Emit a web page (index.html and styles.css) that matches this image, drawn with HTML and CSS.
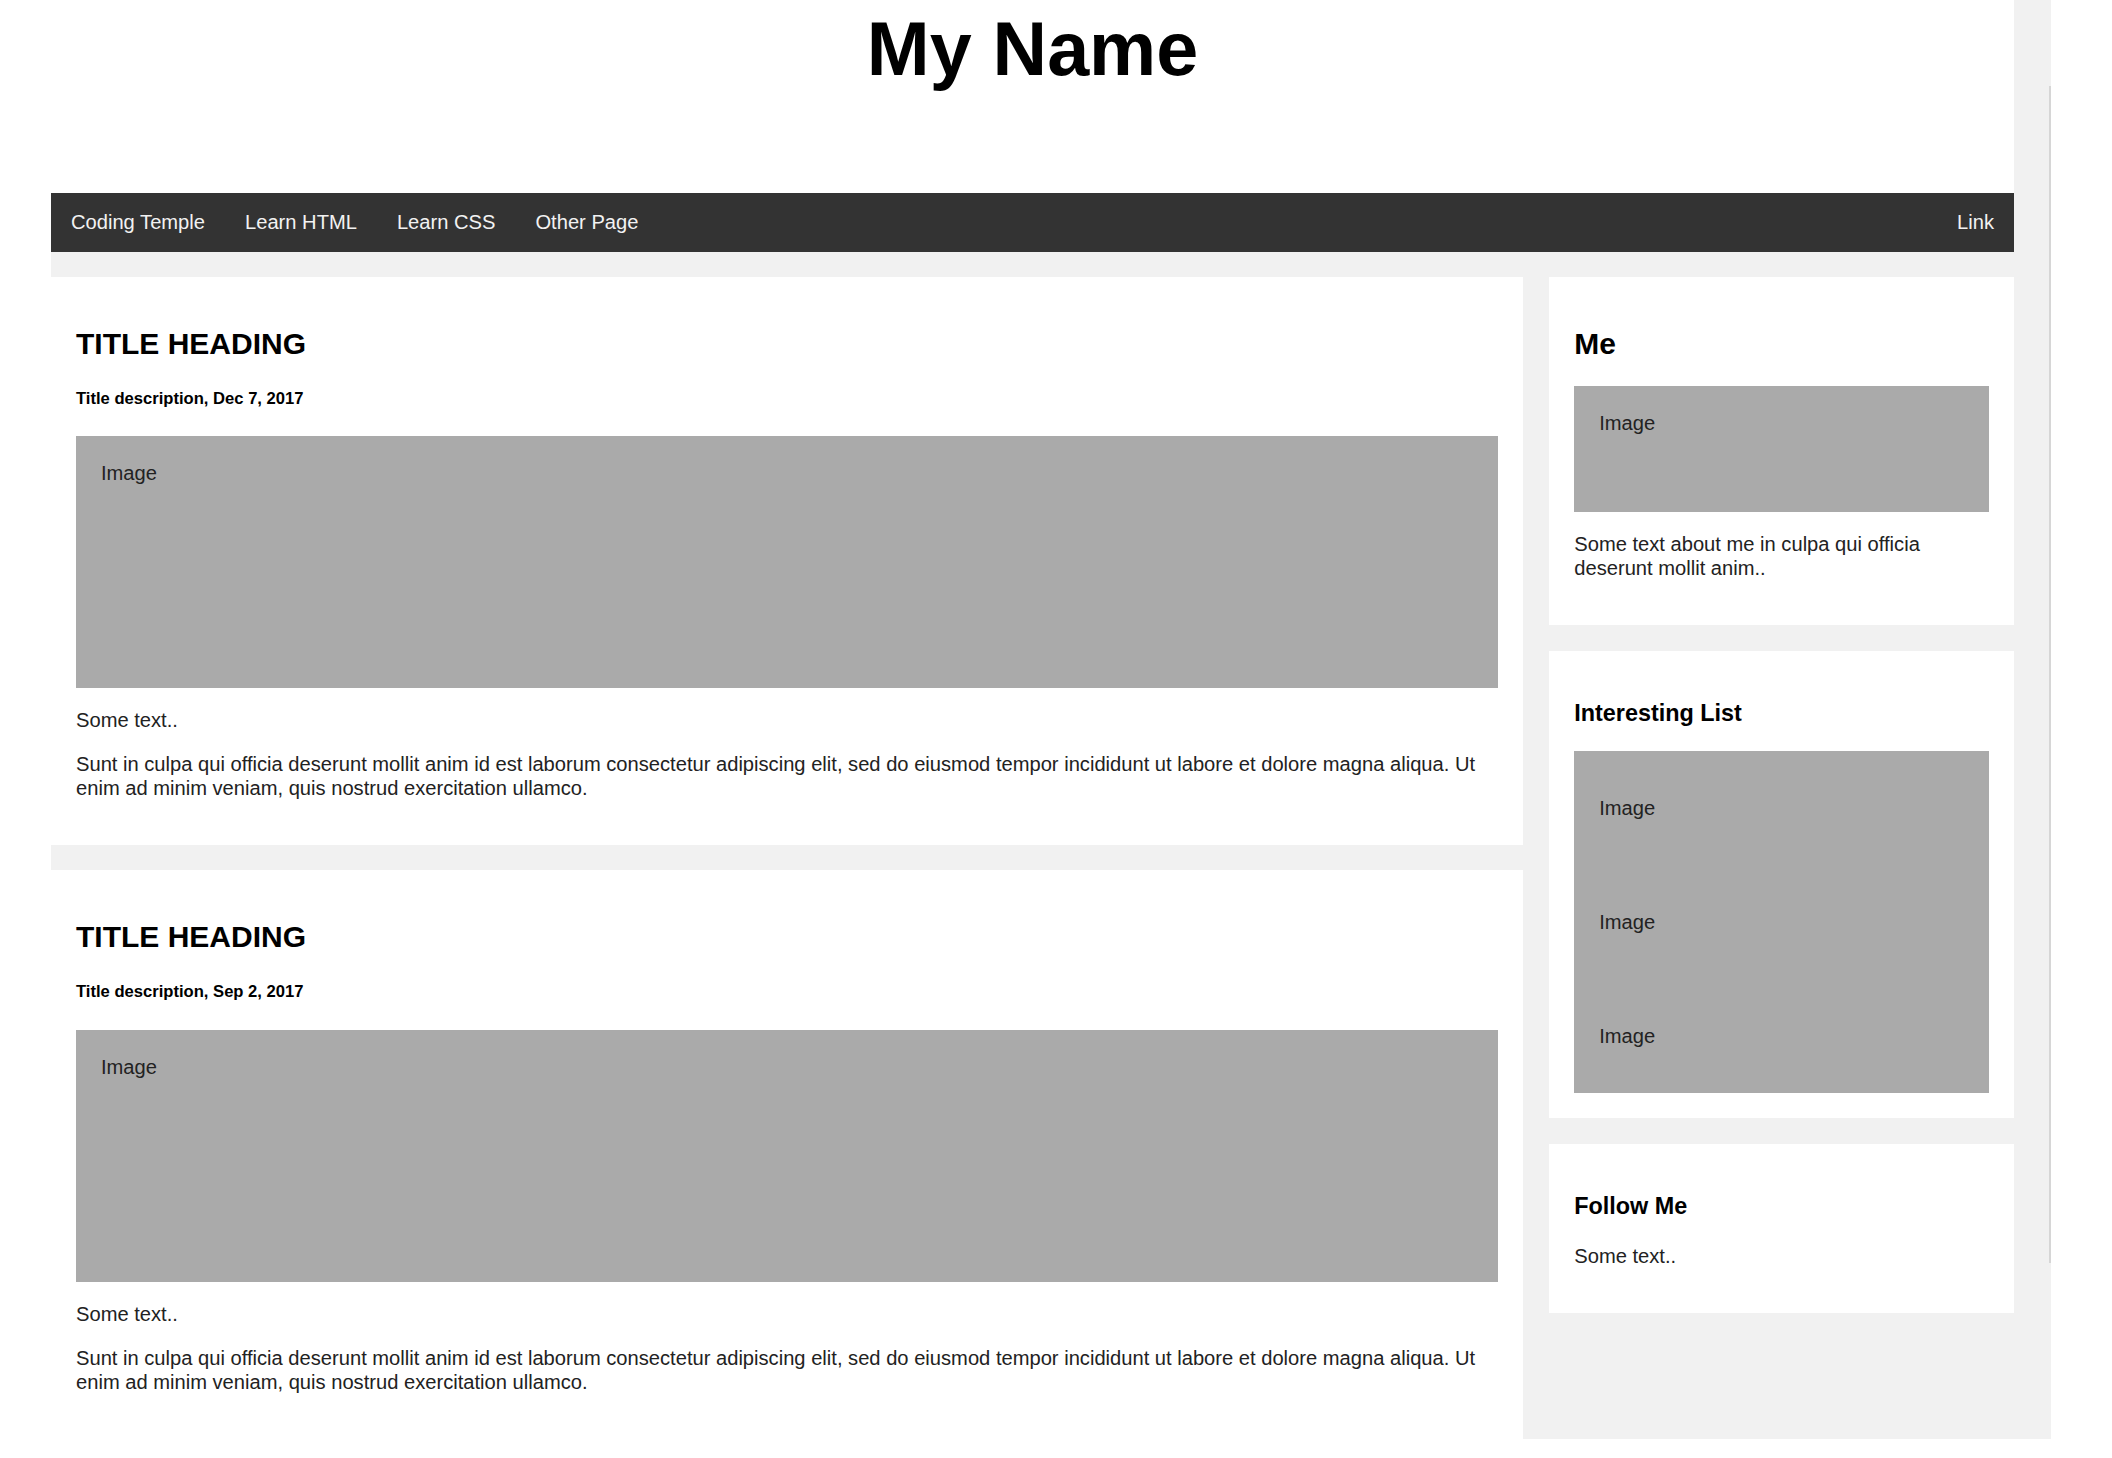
FILE: index.html
```html
<!DOCTYPE html>
<html lang="en">
<head>
<meta charset="utf-8">
<title>My Name</title>
<link rel="stylesheet" href="styles.css">
</head>
<body>
<div class="page">
  <div class="main">
    <header class="header">
      <h1>My Name</h1>
    </header>
    <nav class="topnav">
      <a href="#">Coding Temple</a>
      <a href="#">Learn HTML</a>
      <a href="#">Learn CSS</a>
      <a href="#">Other Page</a>
      <a href="#" class="right">Link</a>
    </nav>
    <div class="row">
      <div class="leftcolumn">
        <div class="card">
          <h2>TITLE HEADING</h2>
          <h5>Title description, Dec 7, 2017</h5>
          <div class="fakeimg tall">Image</div>
          <p>Some text..</p>
          <p>Sunt in culpa qui officia deserunt mollit anim id est laborum consectetur adipiscing elit, sed do eiusmod tempor incididunt ut labore et dolore magna aliqua. Ut enim ad minim veniam, quis nostrud exercitation ullamco.</p>
        </div>
        <div class="card">
          <h2>TITLE HEADING</h2>
          <h5>Title description, Sep 2, 2017</h5>
          <div class="fakeimg tall">Image</div>
          <p>Some text..</p>
          <p>Sunt in culpa qui officia deserunt mollit anim id est laborum consectetur adipiscing elit, sed do eiusmod tempor incididunt ut labore et dolore magna aliqua. Ut enim ad minim veniam, quis nostrud exercitation ullamco.</p>
        </div>
      </div>
      <div class="rightcolumn">
        <div class="card">
          <h2>Me</h2>
          <div class="fakeimg short">Image</div>
          <p>Some text about me in culpa qui officia deserunt mollit anim..</p>
        </div>
        <div class="card">
          <h3>Interesting List</h3>
          <div class="fakeimg"><p>Image</p></div>
          <div class="fakeimg"><p>Image</p></div>
          <div class="fakeimg"><p>Image</p></div>
        </div>
        <div class="card">
          <h3>Follow Me</h3>
          <p>Some text..</p>
        </div>
      </div>
    </div>
  </div>
  <div class="gutter"><div class="track"></div></div>
</div>
</body>
</html>
```
FILE: styles.css
```css
* {
  box-sizing: border-box;
}

html,
body {
  margin: 0;
  background: #ffffff;
}

body {
  font-family: "Liberation Sans", Arial, sans-serif;
  font-size: 20.15px;
  color: #000000;
}

.page {
  display: flex;
  margin-left: 51px;
  width: 2000px;
  background: #f1f1f1;
}

.main {
  width: 1963px;
}

.gutter {
  width: 37px;
}

.track {
  margin: 86px 0 0 35px;
  width: 2px;
  height: 1177px;
  background: #d6d6d6;
}

.header {
  background: #ffffff;
  padding: 7px 0 101px;
  text-align: center;
}

.header h1 {
  margin: 0;
  font-size: 75.5px;
  line-height: 85px;
  font-weight: bold;
}

.topnav {
  display: flex;
  background: #333333;
}

.topnav a {
  display: block;
  color: #f2f2f2;
  text-decoration: none;
  padding: 17px 20px 18px;
  line-height: 24px;
}

.topnav a.right {
  margin-left: auto;
}

.row {
  display: flex;
  align-items: flex-start;
}

.leftcolumn {
  width: 75%;
}

.rightcolumn {
  width: 25%;
  padding-left: 26px;
}

.card {
  background: #ffffff;
  padding: 25px;
  margin-top: 25px;
}

.rightcolumn .card {
  margin-top: 26px;
}

.rightcolumn .card:first-child {
  margin-top: 25px;
}

.card h2 {
  font-size: 30px;
  margin: 25px 0;
}

.card h3 {
  font-size: 23.4px;
  margin: 24px 0;
}

.card h5 {
  font-size: 16.6px;
  margin: 27.7px 0;
}

.card p {
  margin: 20px 0;
  line-height: 24px;
  color: #222222;
}

.fakeimg {
  background: #aaaaaa;
  padding: 25px;
  line-height: 24px;
  color: #222222;
}

.fakeimg.tall {
  height: 252px;
}

.fakeimg.short {
  height: 126px;
}
```
